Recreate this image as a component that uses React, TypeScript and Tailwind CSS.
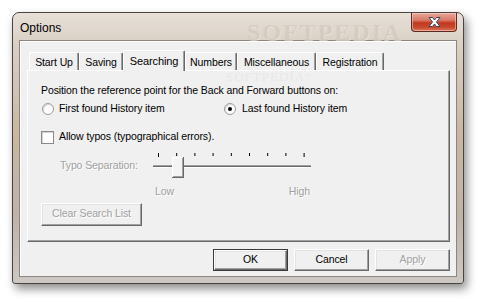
const tabs = [
  { label: "Start Up", w: "w-[50px]" },
  { label: "Saving", w: "w-[44px]" },
  { label: "Searching", w: "w-[62px]", active: true },
  { label: "Numbers", w: "w-[52px]" },
  { label: "Miscellaneous", w: "w-[79px]" },
  { label: "Registration", w: "w-[68px]" },
];

function Radio({ checked }: { checked?: boolean }) {
  return (
    <span className="flex h-[12px] w-[12px] items-center justify-center rounded-full border border-[#9c9c9c] bg-white shadow-[inset_1px_1px_1px_#d8d8d8]">
      {checked && <span className="h-[4px] w-[4px] rounded-full bg-black" />}
    </span>
  );
}

function Button({
  children,
  disabled,
  isDefault,
  className = "",
}: {
  children: React.ReactNode;
  disabled?: boolean;
  isDefault?: boolean;
  className?: string;
}) {
  return (
    <div
      className={`flex h-[22px] items-center justify-center ${
        isDefault ? "border border-[#3a3a3a]" : ""
      } ${className}`}
    >
      <div className="flex h-full w-full items-center justify-center border-l border-t border-white border-r-[#696969] border-b-[#696969] border-r border-b bg-[#f0f0f0] shadow-[inset_-1px_-1px_0_#a0a0a0,inset_1px_1px_0_#e3e3e3]">
        <span
          className={
            disabled
              ? "text-[#a0a0a0] [text-shadow:1px_1px_0_#ffffff]"
              : "text-black"
          }
        >
          {children}
        </span>
      </div>
    </div>
  );
}

function TrackBar() {
  const ticks = [0, 1, 2, 3, 4, 5, 6, 7, 8];
  return (
    <svg width="162" height="28" viewBox="0 0 162 28">
      {ticks.map((i) => (
        <line
          key={i}
          x1={7.5 + i * 18.2}
          x2={7.5 + i * 18.2}
          y1={1}
          y2={i === 0 || i === 8 ? 5 : 4}
          stroke="#000"
          strokeWidth="1"
        />
      ))}
      <line x1="2" x2="160" y1="13.5" y2="13.5" stroke="#a0a0a0" />
      <line x1="2" x2="160" y1="14.5" y2="14.5" stroke="#696969" />
      <line x1="2" x2="160" y1="15.5" y2="15.5" stroke="#ffffff" />
      <rect x="21.5" y="5.5" width="10" height="19" fill="#f4f4f4" stroke="#a0a0a0" />
      <line x1="21.5" x2="21.5" y1="5" y2="25" stroke="#ffffff" />
      <line x1="21" x2="32" y1="5.5" y2="5.5" stroke="#ffffff" />
      <line x1="32.5" x2="32.5" y1="5" y2="25" stroke="#696969" />
      <line x1="21" x2="33" y1="25.5" y2="25.5" stroke="#696969" />
    </svg>
  );
}

export default function App() {
  return (
    <div className="h-[305px] w-[484px] overflow-hidden bg-white pl-[12px] pt-[12px] font-['Liberation_Sans',Arial,sans-serif] text-[10.5px] tracking-[-0.1px] text-black">
      <div className="relative flex h-[272px] w-[452px] flex-col rounded-t-[7px] rounded-b-[3px] border border-[#4a4440] bg-[linear-gradient(180deg,#e7e0d8_0%,#d9cfc3_12%,#c9b6a3_45%,#bfb3a8_75%,#cdc8c3_100%)] shadow-[3px_5px_10px_rgba(0,0,0,0.45)]">
        {/* title bar */}
        <div className="relative flex h-[27px] items-start justify-between">
          <span className="pl-[7px] pt-[6px] text-[12px] tracking-normal text-black">Options</span>
          <span className="pointer-events-none absolute left-[234px] top-[1px] font-['Liberation_Serif',serif] text-[24px] font-bold tracking-[2px] text-[#cfc6bc] opacity-60 [text-shadow:1px_1px_0_#eee8e2]">
            SOFTPEDIA
          </span>
          <div className="relative mr-[6px] flex h-[19px] w-[46px] items-center justify-center rounded-b-[4px] border border-t-0 border-[#5b2a22] bg-[linear-gradient(180deg,#e9a899_0%,#d77a66_40%,#c2381f_55%,#c84a30_80%,#e07a5a_100%)] shadow-[inset_0_0_0_1px_rgba(255,220,210,0.5)]">
            <svg width="15" height="12" viewBox="0 0 15 12">
              <path
                d="M2 1.5 L5.5 1.5 L7.5 4 L9.5 1.5 L13 1.5 L9.5 6 L13 10.5 L9.5 10.5 L7.5 8 L5.5 10.5 L2 10.5 L5.5 6 Z"
                fill="#ffffff"
                stroke="#3a4455"
                strokeWidth="1"
                strokeLinejoin="round"
              />
            </svg>
          </div>
        </div>

        {/* client area */}
        <div className="mx-[6px] flex h-[237px] flex-col border border-[#8d857d] bg-[#f0f0f0] pl-[7px] pr-[6px] shadow-[inset_1px_1px_0_#ffffff]">
          {/* tabs */}
          <div className="ml-[2px] mt-[8px] flex h-[21px] items-end">
            {tabs.map((t) =>
              t.active ? (
                <div
                  key={t.label}
                  className={`${t.w} relative z-10 -mb-px flex h-[21px] items-start justify-center rounded-t-[2px] border-l border-t border-white border-r border-r-[#696969] bg-[#f0f0f0] pt-[2px] text-[11px] shadow-[inset_-1px_0_0_#a0a0a0]`}
                >
                  {t.label}
                </div>
              ) : (
                <div
                  key={t.label}
                  className={`${t.w} flex h-[18px] items-start justify-center rounded-t-[2px] border-l border-t border-white border-r border-r-[#696969] bg-[#f0f0f0] pt-[2px] shadow-[inset_-1px_0_0_#a0a0a0]`}
                >
                  {t.label}
                </div>
              ),
            )}
          </div>

          {/* tab panel */}
          <div className="relative flex h-[172px] w-[423px] flex-col border-l border-t border-white border-r border-b border-r-[#696969] border-b-[#696969] pl-[13px] shadow-[inset_-1px_-1px_0_#a0a0a0]">
            <span className="pointer-events-none absolute left-[198px] top-[-1px] font-['Liberation_Serif',serif] text-[13px] leading-[13px] tracking-[1px] text-[#e8e8e8]">
              SOFTPEDIA<sup className="text-[6px]">™</sup>
            </span>
            <div className="relative mt-[13px] leading-[13px]">
              Position the reference point for the Back and Forward buttons on:
            </div>
            <div className="relative mt-[5px] flex h-[14px] items-center">
              <div className="flex w-[183px] items-center">
                <span className="ml-[1px]">
                  <Radio />
                </span>
                <span className="ml-[5px]">First found History item</span>
              </div>
              <div className="flex items-center">
                <Radio checked />
                <span className="ml-[6px]">Last found History item</span>
              </div>
            </div>
            <div className="mt-[14px] flex h-[14px] items-center">
              <span className="h-[13px] w-[13px] border border-[#8a8a8a] bg-white shadow-[inset_1px_1px_1px_#d0d0d0]" />
              <span className="ml-[5px]">Allow typos (typographical errors).</span>
            </div>
            <div className="mt-[8px] flex items-start">
              <span className="ml-[19px] mt-[6px] w-[91px] text-[#a0a0a0] [text-shadow:1px_1px_0_#ffffff]">
                Typo Separation:
              </span>
              <TrackBar />
            </div>
            <div className="mt-[4px] flex w-[269px] justify-between pl-[114px] text-[#a0a0a0] [text-shadow:1px_1px_0_#ffffff]">
              <span>Low</span>
              <span>High</span>
            </div>
            <div className="mt-[3px]">
              <Button disabled className="h-[23px] w-[101px]">
                Clear Search List
              </Button>
            </div>
          </div>

          {/* dialog buttons */}
          <div className="mt-[7px] flex w-[423px] justify-end gap-[6px]">
            <Button isDefault className="w-[75px]">
              OK
            </Button>
            <Button className="w-[75px]">Cancel</Button>
            <Button disabled className="w-[75px]">
              Apply
            </Button>
          </div>
        </div>
      </div>
    </div>
  );
}
